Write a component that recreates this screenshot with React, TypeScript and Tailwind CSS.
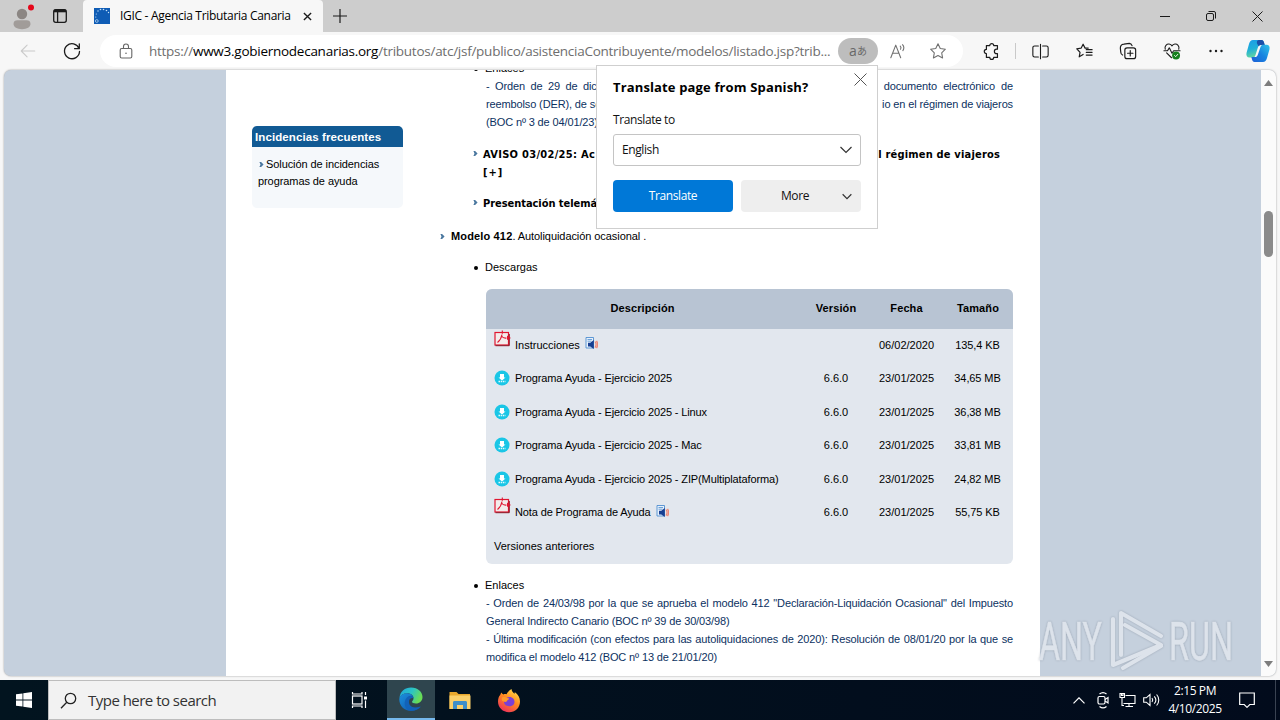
import type { ReactNode } from "react";
import clsx from "clsx";

type Row = {
  icon: "pdf" | "download";
  name: string;
  audio?: boolean;
  version?: string;
  date: string;
  size: string;
};

const ROWS: Row[] = [
  { icon: "pdf", name: "Instrucciones", audio: true, date: "06/02/2020", size: "135,4 KB" },
  { icon: "download", name: "Programa Ayuda - Ejercicio 2025", version: "6.6.0", date: "23/01/2025", size: "34,65 MB" },
  { icon: "download", name: "Programa Ayuda - Ejercicio 2025 - Linux", version: "6.6.0", date: "23/01/2025", size: "36,38 MB" },
  { icon: "download", name: "Programa Ayuda - Ejercicio 2025 - Mac", version: "6.6.0", date: "23/01/2025", size: "33,81 MB" },
  { icon: "download", name: "Programa Ayuda - Ejercicio 2025 - ZIP(Multiplataforma)", version: "6.6.0", date: "23/01/2025", size: "24,82 MB" },
  { icon: "pdf", name: "Nota de Programa de Ayuda", audio: true, version: "6.6.0", date: "23/01/2025", size: "55,75 KB" },
];

function Icon({ children, size = 20, className }: { children: ReactNode; size?: number; className?: string }) {
  return (
    <svg
      width={size}
      height={size}
      viewBox="0 0 20 20"
      fill="none"
      stroke="currentColor"
      strokeWidth="1.2"
      strokeLinecap="round"
      strokeLinejoin="round"
      className={clsx("block shrink-0", className)}
    >
      {children}
    </svg>
  );
}

function Slot({ children, className }: { children: ReactNode; className?: string }) {
  return <div className={clsx("flex h-full shrink-0 items-center justify-center", className)}>{children}</div>;
}

/* ---------- Browser chrome ---------- */

function TabBar() {
  return (
    <div className="flex h-8 items-stretch bg-[#cdcdcd] text-[#1b1b1b]">
      <div className="flex w-[83px] items-center">
        <svg width="26" height="26" viewBox="0 0 26 26" className="ml-[10px] mt-[2px] shrink-0">
          <circle cx="12" cy="10" r="5.2" fill="#8b8683" />
          <path d="M3.500 20c0-2.800 1.600-3.800 4-3.800h9c2.400 0 4 1 4 3.800 0 3-3.500 5.200-8.500 5.200S3.500 23 3.500 20z" fill="#a19c99" />
          <circle cx="21" cy="3.500" r="3" fill="#e5061a" />
        </svg>
        <svg width="16" height="16" viewBox="0 0 16 16" fill="none" stroke="currentColor" strokeWidth="1.300" className="ml-4 shrink-0">
          <rect x="1.700" y="1.700" width="12.600" height="12.600" rx="2" />
          <path d="M2 3h12" strokeWidth="2.600" />
          <path d="M5.600 4v10" />
        </svg>
      </div>
      <div className="flex w-60 items-center rounded-t-[4px] bg-[#f7f7f7]">
        <svg width="16" height="16" viewBox="0 0 16 16" className="ml-[11px] shrink-0">
          <rect width="16" height="16" fill="#0f5cb5" />
          <g fill="#c9e3f8">
            <circle cx="4" cy="3" r=".7" />
            <circle cx="6.500" cy="1.500" r=".8" />
            <circle cx="9.500" cy="1.500" r=".8" />
            <circle cx="12.500" cy="2.500" r=".8" />
            <circle cx="14.500" cy="4.500" r=".7" />
            <circle cx="2.300" cy="6" r=".6" />
            <circle cx="1.800" cy="9" r=".6" />
          </g>
          <circle cx="2.800" cy="13" r="1.400" fill="none" stroke="#c9e3f8" strokeWidth=".7" />
        </svg>
        <span className="ml-[10px] w-[183px] whitespace-nowrap text-[12px] tracking-[-0.3px] text-black">
          IGIC - Agencia Tributaria Canaria
        </span>
        <svg width="9" height="9" viewBox="0 0 10 10" stroke="currentColor" strokeWidth="1.500" className="shrink-0">
          <path d="M1 1l8 8M9 1l-8 8" />
        </svg>
      </div>
      <svg width="14" height="14" viewBox="0 0 14 14" stroke="currentColor" strokeWidth="1.200" className="ml-[10px] mt-[9px]">
        <path d="M7 0v14M0 7h14" />
      </svg>
      <div className="ml-auto flex">
        <Slot className="w-[46px]">
          <svg width="10" height="10" viewBox="0 0 10 10" stroke="currentColor"><path d="M0 5.500h10" /></svg>
        </Slot>
        <Slot className="w-[46px]">
          <svg width="10" height="10" viewBox="0 0 10 10" fill="none" stroke="currentColor">
            <rect x=".5" y="2.500" width="7" height="7" rx="1.500" />
            <path d="M2.500.5H8a1.500 1.500 0 0 1 1.500 1.500v5.500" />
          </svg>
        </Slot>
        <Slot className="w-[46px]">
          <svg width="11" height="11" viewBox="0 0 11 11" stroke="currentColor"><path d="M.5.5l10 10M10.500.5l-10 10" /></svg>
        </Slot>
      </div>
    </div>
  );
}

function Copilot() {
  return (
    <svg width="24" height="24" viewBox="0 0 24 24" className="shrink-0">
      <defs>
        <linearGradient id="cpA" x1="0" y1="0" x2="0.300" y2="1">
          <stop offset="0" stopColor="#1a9be8" />
          <stop offset=".55" stopColor="#20b0d8" />
          <stop offset="1" stopColor="#62d6a0" />
        </linearGradient>
        <linearGradient id="cpB" x1="1" y1="0" x2="0" y2="1">
          <stop offset="0" stopColor="#2ec4e8" />
          <stop offset=".5" stopColor="#1783e0" />
          <stop offset="1" stopColor="#1d5fd6" />
        </linearGradient>
      </defs>
      <path d="M7 1h8.500c1.500 0 2 1 2.500 2.500l.7 2.500h-3.500c-2 0-2.800.8-3.400 2.800L9.500 16c-.6 1.900-1.500 2.500-3 2.500H3.500C1 18.500 0 16.500.5 14L3 5C3.800 2.200 5 1 7 1z" fill="url(#cpA)" />
      <path d="M13 1h2.500c1.500 0 2 1 2.500 2.500l.7 2.500h-3.500c-1.300 0-2 .3-2.600 1.200L11 4.500C10.500 2.500 11.300 1 13 1z" fill="#1a4fa8" />
      <path d="M17 23H8.500c-1.500 0-2-1-2.500-2.500L5.400 18h3.200c2 0 2.800-.8 3.400-2.800L14.500 8c.6-1.600 1.500-2.200 3-2.200h3c2.500 0 3.500 2 3 4.500L21 19c-.8 2.800-2 4-4 4z" fill="url(#cpB)" />
    </svg>
  );
}

function Toolbar() {
  return (
    <div className="flex h-[38px] items-center bg-[#f7f7f7] pl-1.5 text-[#1b1b1b]">
      <Slot className="w-11 text-[#cacaca]">
        <Icon size={18}><path d="M17.500 10H2.500M9 3.500L2.500 10 9 16.500" /></Icon>
      </Slot>
      <Slot className="w-11">
        <Icon><path d="M17 7.500A7.500 7.500 0 1 0 17.500 10.500M17.300 3v4.700h-4.700" strokeWidth="1.300" /></Icon>
      </Slot>
      <div className="ml-1.5 flex h-8 w-[863px] items-center rounded-full bg-white">
        <svg width="14" height="17" viewBox="0 0 14 17" fill="none" stroke="#666" strokeWidth="1.100" className="ml-[19px] shrink-0">
          <rect x="1.200" y="5.500" width="11.600" height="9.500" rx="1.500" />
          <path d="M4.500 5.500V3.500a2.500 2.500 0 0 1 5 0v2" />
          <circle cx="7" cy="10.300" r=".8" fill="#666" stroke="none" />
        </svg>
        <span className="ml-4 w-[689px] shrink-0 whitespace-nowrap text-[13.5px] tracking-[-0.26px] text-[#6e6e6e]">
          https://<span className="text-black">www3.gobiernodecanarias.org</span>
          /tributos/atc/jsf/publico/asistenciaContribuyente/modelos/listado.jsp?trib...
        </span>
        <div className="flex h-[26px] w-10 shrink-0 items-center justify-center rounded-full bg-[#bdbdbd] text-[#686868]">
          <span className="text-[14px] leading-none">a</span>
          <span className="font-['Noto_Sans_CJK_JP',sans-serif] text-[10px] leading-none">あ</span>
        </div>
        <Slot className="w-10 text-[#707070]">
          <Icon size={18}>
            <path d="M2 17.500L7.500 3.500 13 17.500M4 12.500h7M12.500 4.500c1 1 1 2.500.3 3.600M15 3c1.600 1.800 1.700 4.700.4 6.600" />
          </Icon>
        </Slot>
        <Slot className="w-10 text-[#707070]">
          <Icon size={18}>
            <path d="M10 2l2.500 5.200 5.700.8-4.100 4 1 5.700L10 15l-5.100 2.700 1-5.700-4.100-4 5.700-.8z" />
          </Icon>
        </Slot>
      </div>
      <Slot className="w-[52px] pl-1">
        <Icon size={17}>
          <path d="M4 3h4a2.300 2.300 0 0 1 4.600 0H17v4.300h-1a2.600 2.600 0 0 0 0 5.200h1V17h-4.400a2.300 2.300 0 0 1-4.600 0H4v-4.500a2.500 2.500 0 0 1 0-5z" strokeWidth="1.400" />
        </Icon>
      </Slot>
      <div className="mr-0.5 h-4 w-px bg-[#c9c9c9]" />
      <Slot className="w-11">
        <Icon size={17}>
          <path d="M7.500 3.500H3a2 2 0 0 0-2 2v9a2 2 0 0 0 2 2h4.500M12.500 3.500H17a2 2 0 0 1 2 2v9a2 2 0 0 1-2 2h-4.500M10 1.500v17" strokeWidth="1.300" />
        </Icon>
      </Slot>
      <Slot className="w-11">
        <Icon size={18}>
          <path d="M9 13.800L4.700 16.500l.9-5L2 7.500l4.900-.7L9 2.400l2.200 4.400h3.500M12.500 8.500H19M12.500 11.500H19M12.500 14.500H19" strokeWidth="1.300" />
        </Icon>
      </Slot>
      <Slot className="w-11">
        <Icon size={18}>
          <rect x="6.500" y="6.500" width="12" height="12" rx="2.500" strokeWidth="1.300" />
          <path d="M4 14.500c-1.500-.5-2-1.500-2-3L1.500 7a4.500 4.500 0 0 1 4-4.700l6-.8c1.500 0 2.500 1 3 2.500M12.500 9.500v6M9.500 12.500h6" strokeWidth="1.300" />
        </Icon>
      </Slot>
      <Slot className="w-11">
        <Icon size={18}>
          <path d="M2.500 8C1.300 4.500 4.300 2 6.800 2.300 8.500 2.500 9.500 3.500 10 4.300c.5-.8 1.500-1.800 3.200-2 2.500-.3 5.500 2.200 4.300 5.700M4 12l5.500 5.500M1 9.800h4l2-3.300 3 6 1.800-2.700H19" />
          <circle cx="14.500" cy="15" r="4.400" fill="#15801c" stroke="none" />
          <path d="M12.800 15l1.300 1.300 2.300-2.600" stroke="#fff" strokeWidth="1" />
        </Icon>
      </Slot>
      <Slot className="w-11">
        <svg width="14" height="4" viewBox="0 0 14 4" fill="currentColor">
          <circle cx="1.500" cy="2" r="1.200" />
          <circle cx="7" cy="2" r="1.200" />
          <circle cx="12.500" cy="2" r="1.200" />
        </svg>
      </Slot>
      <Slot className="w-10"><Copilot /></Slot>
    </div>
  );
}

function TranslatePopup() {
  return (
    <div className="absolute left-[596px] top-[65px] h-[164px] w-[282px] border border-[#cfcfcf] bg-white px-4 text-[12px] tracking-[-0.4px] text-[#111]">
      <div className="flex h-[42px] items-center justify-between">
        <h2 className="mt-0.5 whitespace-nowrap text-[13px] font-bold tracking-[0.14px] text-black">Translate page from Spanish?</h2>
        <svg width="13" height="13" viewBox="0 0 13 13" stroke="#555" className="-mr-[6px] -mt-[16px]"><path d="M.5.5l12 12M12.500.5l-12 12" /></svg>
      </div>
      <p className="h-[26px] leading-6">Translate to</p>
      <div className="flex h-8 items-center justify-between rounded-[3px] border border-[#c4c4c4] px-2">
        <span>English</span>
        <svg width="12" height="8" viewBox="0 0 12 8" fill="none" stroke="#333" strokeWidth="1.200"><path d="M.5 1L6 6.500 11.500 1" /></svg>
      </div>
      <div className="mt-3.5 flex gap-2">
        <button className="h-8 w-[120px] rounded-[4px] bg-[#0078d7] text-white">Translate</button>
        <button className="flex h-8 w-[120px] items-center justify-end rounded-[4px] bg-[#eee] pr-[9px]">
          <span className="mr-[33px]">More</span>
          <svg width="10" height="7" viewBox="0 0 11 7" fill="none" stroke="#333" strokeWidth="1.300"><path d="M.7 1l4.800 4.800L10.300 1" /></svg>
        </button>
      </div>
    </div>
  );
}

/* ---------- Page ---------- */

function Arrow({ className }: { className?: string }) {
  return (
    <svg width="5" height="5" viewBox="0 0 5 6" className={clsx("shrink-0", className)}>
      <path d="M0 0h2l3 3-3 3H0l1.300-3z" fill="#4a779f" />
    </svg>
  );
}

function PdfIcon() {
  return (
    <svg width="17" height="17" viewBox="0 0 17 17" className="-mt-[13px] shrink-0">
      <rect x="1" y="2.500" width="13.500" height="12.500" fill="#f3eceb" stroke="#e01630" strokeWidth="1.200" />
      <path d="M1.500 15.700h13.800V4" fill="none" stroke="#8c1826" strokeWidth="1" />
      <path d="M3.500 12.500C6 10.500 7.500 7.500 8 4.500M8.300.5v3.300M7.500 6c1.500 2 3 2.300 5 2" fill="none" stroke="#e01630" strokeWidth="1.100" />
      <path d="M13 5.500l4 2.500-4 2z" fill="#e01630" />
    </svg>
  );
}

function DownloadIcon() {
  return (
    <svg width="16" height="16" viewBox="0 0 16 16" className="shrink-0">
      <circle cx="8" cy="8" r="7.500" fill="#1ac6e6" />
      <path d="M6 4h4v3.500h1.500L8 10.500 4.500 7.500H6z" fill="#fff" />
      <path d="M4.500 11.500h7" fill="none" stroke="#e4fafd" strokeWidth="1.400" strokeDasharray="1.500 .7" />
    </svg>
  );
}

function AudioIcon() {
  return (
    <svg width="13" height="13" viewBox="0 0 13 13" className="ml-[5px] -mt-0.5 shrink-0">
      <path d="M1 .5h7.500V11H1z" fill="#e8f1fb" stroke="#4f8fd0" strokeWidth=".9" />
      <path d="M2.500 2.500h4.500M2.500 4.200h4" stroke="#4f8fd0" strokeWidth=".8" />
      <path d="M3 5.700h2.300L8.800 3v9L5.300 9.500H3z" fill="#173f91" />
      <path d="M10 4.500c1.200 1.700 1.200 4.500 0 6.200M11.500 3.800c1.400 2.200 1.400 5.200 0 7.400" fill="none" stroke="#ee8a78" strokeWidth="1.300" />
    </svg>
  );
}

function Sidebar() {
  return (
    <aside className="ml-[26px] mt-14 w-[151px] shrink-0">
      <h3 className="h-[21px] rounded-t-[5px] bg-[#115a94] pl-[3px] text-[11.5px] font-bold leading-[22px] tracking-[0.1px] text-white">
        Incidencias frecuentes
      </h3>
      <div className="h-[61px] rounded-b-[5px] bg-[#f5f8fb] pl-1.5 pt-[9px] leading-[17px] tracking-[-0.08px] text-black">
        <div className="flex items-center">
          <Arrow className="ml-px mr-0.5" />
          <span>Solución de incidencias</span>
        </div>
        <div>programas de ayuda</div>
      </div>
    </aside>
  );
}

function Bullet({ children }: { children: ReactNode }) {
  return (
    <div className="-ml-3 flex items-center">
      <span className="mr-[7px] mt-0.5 size-1 rounded-full bg-black" />
      {children}
    </div>
  );
}

function Heading({ children }: { children: ReactNode }) {
  return (
    <div className="-ml-[13px] flex items-center font-['DejaVu_Sans_Condensed','DejaVu_Sans',sans-serif] font-bold tracking-[0.18px]">
      <Arrow className="mb-[3px] mr-[5px]" />
      {children}
    </div>
  );
}

function DownloadTable() {
  return (
    <div className="mt-[13px] h-[275px] overflow-hidden rounded-[6px] bg-[#e2e7ee] text-black">
      <div className="grid h-10 grid-cols-[313px_74px_67px_73px] items-center bg-[#b8c4d3] pb-0.5 text-center font-bold tracking-[0.1px]">
        <span>Descripción</span>
        <span>Versión</span>
        <span>Fecha</span>
        <span className="pl-[3px]">Tamaño</span>
      </div>
      {ROWS.map((row, i) => (
        <div key={i} className="grid h-[33.5px] grid-cols-[313px_74px_67px_73px] items-center pb-0.5 text-center">
          <div className="flex items-center pl-2">
            {row.icon === "pdf" ? <PdfIcon /> : <DownloadIcon />}
            <span
              className={clsx(
                "whitespace-nowrap",
                row.icon === "pdf" ? "ml-1" : "ml-[5px]",
                row.name.includes(" ") && "tracking-[-0.12px]"
              )}
            >
              {row.name}
            </span>
            {row.audio && <AudioIcon />}
          </div>
          <span>{row.version}</span>
          <span>{row.date}</span>
          <span className="pl-[2px] tracking-[-0.1px]">{row.size}</span>
        </div>
      ))}
      <div className="flex h-[33px] items-center pb-0.5 pl-2">Versiones anteriores</div>
    </div>
  );
}

function Article() {
  return (
    <main className="-mt-[11px] ml-[83px] w-[527px] whitespace-nowrap leading-[18px] text-black">
      <Bullet>Enlaces</Bullet>
      <div className="tracking-[-0.13px] text-[#0c3161]">
        <div className="flex justify-between">
          <span className="[word-spacing:2.600px]">- Orden de 29 de dic</span>
          <span className="[word-spacing:3.200px]">documento electrónico de</span>
        </div>
        <div className="flex justify-between">
          <span>reembolso (DER), de se</span>
          <span>io en el régimen de viajeros</span>
        </div>
        <div>(BOC nº 3 de 04/01/23)</div>
      </div>

      <div className="mt-[15px]">
        <Heading>
          <div className="flex w-[517px] justify-between">
            <span className="tracking-[0.3px]">AVISO 03/02/25: Ac</span>
            <span>l régimen de viajeros</span>
          </div>
        </Heading>
        <div className="-ml-[3px] font-['DejaVu_Sans_Condensed','DejaVu_Sans',sans-serif] font-bold tracking-[1px]">[+]</div>
      </div>
      <div className="mt-[13px]">
        <Heading><span className="tracking-[-0.05px]">Presentación telemá</span></Heading>
      </div>
      <div className="-ml-[46px] mt-3.5 flex items-center">
        <Arrow className="mr-1.5" />
        <b className="tracking-[0.15px]">Modelo 412</b>
        <span className="tracking-[-0.07px]">. Autoliquidación ocasional .</span>
      </div>
      <div className="mt-[13px]">
        <Bullet>Descargas</Bullet>
      </div>

      <DownloadTable />

      <div className="mt-3">
        <Bullet>Enlaces</Bullet>
      </div>
      <div className="tracking-[-0.13px] text-[#0c3161]">
        <p className="[text-align-last:justify]">
          - Orden de 24/03/98 por la que se aprueba el modelo 412 "Declaración-Liquidación Ocasional" del Impuesto
        </p>
        <p>General Indirecto Canario (BOC nº 39 de 30/03/98)</p>
        <p className="[text-align-last:justify]">
          - Última modificación (con efectos para las autoliquidaciones de 2020): Resolución de 08/01/20 por la que se
        </p>
        <p>modifica el modelo 412 (BOC nº 13 de 21/01/20)</p>
      </div>
    </main>
  );
}

function Scrollbar() {
  return (
    <div className="flex w-[15px] shrink-0 flex-col items-center bg-[#fbfbfb]">
      <svg width="9" height="6" viewBox="0 0 9 6" className="mt-2.5"><path d="M4.500 0L9 6H0z" fill="#7d7d7d" /></svg>
      <div className="mt-[125px] h-[46px] w-[9px] rounded-full bg-[#8b8b8b]" />
      <svg width="9" height="6" viewBox="0 0 9 6" className="mb-[9px] mt-auto"><path d="M4.500 6L9 0H0z" fill="#7d7d7d" /></svg>
    </div>
  );
}

function Watermark() {
  return (
    <svg width="200" height="66" viewBox="0 0 200 66" className="absolute left-[1036px] top-[607px] opacity-80 drop-shadow-[0_0_1px_rgba(90,100,115,0.5)]">
      <g fill="#e3e8ef" stroke="#e3e8ef" strokeWidth=".6" fontSize="53" className="font-['Roboto',sans-serif]">
        <text x="3" y="53" textLength="63" lengthAdjust="spacingAndGlyphs">ANY</text>
        <text x="133" y="53" textLength="64" lengthAdjust="spacingAndGlyphs">RUN</text>
      </g>
      <g fill="none" stroke="#e3e8ef" strokeWidth="4.200" strokeLinejoin="round" strokeLinecap="round">
        <path d="M77 12v46l48-20-36-20" />
        <path d="M85 48V6l40 23" />
        <path d="M87 61l38-22" />
      </g>
    </svg>
  );
}

/* ---------- Taskbar ---------- */

function EdgeLogo() {
  return (
    <svg width="26" height="26" viewBox="0 0 26 26">
      <defs>
        <linearGradient id="edA" x1="0" y1="0" x2="1" y2=".4">
          <stop offset="0" stopColor="#1fa5dc" />
          <stop offset=".55" stopColor="#2bc4c5" />
          <stop offset="1" stopColor="#69dd55" />
        </linearGradient>
        <linearGradient id="edB" x1="0" y1="0" x2="1" y2="1">
          <stop offset="0" stopColor="#1b91de" />
          <stop offset="1" stopColor="#0f4fa5" />
        </linearGradient>
      </defs>
      <path d="M1.500 12C2 5.500 7 1.500 13 1.500c7 0 11.500 4.500 11.500 9.500 0 4-3 6.500-6.500 6.500-2.500 0-4-.8-4-1.700 0-.8 1.500-1.300 1.500-3.600 0-2.700-2.500-5-6-5C5.500 7.200 2.500 9 1.500 12z" fill="url(#edA)" />
      <path d="M1.300 13.500C1.300 9.500 5 7.200 9.300 7.200c2.500 0 4.500 1.200 5.500 2.800-4.500-.5-6 2.500-6 5 0 4 3.500 6.500 8 6.500 2.500 0 4.500-.5 6-1.300C20.500 23 17 25 13 25 6.500 25 1.300 20 1.300 13.500z" fill="url(#edB)" />
      <path d="M9.500 23.500c-3-2.500-4-8-1-11.500 1.500-1.800 4-2.500 6.300-2 .5.800.7 1.500.7 2.200-3-.5-5 1.500-4.500 4.500.6 4 5 5.500 9 4.800 1-.2 2-.5 2.800-.8C20 24 14.500 25.500 9.500 23.500z" fill="#1262b8" />
    </svg>
  );
}

function FirefoxLogo() {
  return (
    <svg width="24" height="25" viewBox="0 0 24 25">
      <defs>
        <linearGradient id="ffA" x1=".8" y1="0" x2=".2" y2="1">
          <stop offset="0" stopColor="#ffe14a" />
          <stop offset=".45" stopColor="#ff8a1f" />
          <stop offset="1" stopColor="#ee2a5f" />
        </linearGradient>
      </defs>
      <path d="M4.500 4.500c.6 1 1 1.500 1.800 2 1.200-.5 2.300-.5 3.300-.2C10.500 4 12.500 2 14.500 1c.2 2.500 1.500 3.500 3 4.800.3-.7.3-1.200.2-1.800 3.500 2.500 5.300 5.500 5.300 9.500 0 6.300-4.700 10.700-11 10.700S1 19.500 1 13.500c0-3 1-5.300 2.200-6.500.2-1 .6-1.800 1.300-2.500z" fill="url(#ffA)" />
      <path d="M8.500 10c1.500 0 2-.7 3.500-1 3.500-.3 5.500 2.200 5.500 4.800 0 3-2.300 4.500-5.300 4.500-3.200 0-5.400-2-5.200-4.800l3.500-.5z" fill="#7a3fd6" />
      <path d="M5 9.500c2-.8 4-.3 5 .5l2.200.5c-.5 1.500-2.500 1.500-3 3.500l-2.500-.5C4.500 13 4.500 11 5 9.500z" fill="#ff9a2a" />
    </svg>
  );
}

function Taskbar() {
  return (
    <footer className="flex h-10 bg-gradient-to-r from-[#02141f] to-[#020b1c] text-white">
      <Slot className="w-12">
        <svg width="16" height="16" viewBox="0 0 16 16" fill="#fff">
          <path d="M0 2.300L6.500 1.400v6.200H0zM7.300 1.300L16 0v7.600H7.300zM0 8.400h6.500v6.200L0 13.700zM7.300 8.400H16V16l-8.700-1.300z" />
        </svg>
      </Slot>
      <div className="flex w-72 items-center border border-[#bdbdbd] bg-[#f2f2f2] text-[#333]">
        <svg width="17" height="17" viewBox="0 0 17 17" fill="none" stroke="#222" strokeWidth="1.300" className="ml-[11px]">
          <circle cx="10.500" cy="6.500" r="5.200" />
          <path d="M6.800 10.300L1 16.300" />
        </svg>
        <span className="ml-[11px] whitespace-nowrap text-[15px] tracking-[-0.52px]">Type here to search</span>
      </div>
      <Slot className="w-[51px] pr-1">
        <svg width="17" height="16" viewBox="0 0 17 16" fill="none" stroke="#fff" strokeWidth="1.200">
          <rect x="1.500" y="4" width="9.500" height="8" />
          <path d="M1.500 0v2h9.500V0M1.500 16v-2h9.500v2M14.500 0v3M14.500 8.500V16" />
          <path d="M13 4.500h3v3h-3z" fill="#fff" stroke="none" />
        </svg>
      </Slot>
      <Slot className="w-12 border-b-2 border-[#76b9ed] bg-[#2f454e]"><EdgeLogo /></Slot>
      <Slot className="w-[49px]">
        <svg width="22" height="19" viewBox="0 0 22 19">
          <path d="M.5 1h7l2 2H21v15H.5z" fill="#e9a82d" />
          <path d="M.5 4.500h21V18H.5z" fill="#fbd06a" />
          <path d="M4 18v-6.500C4 10.500 4.700 10 5.500 10h11c.8 0 1.500.5 1.500 1.500V18h-4v-4H8v4z" fill="#3f8fc9" />
        </svg>
      </Slot>
      <Slot className="w-[49px]"><FirefoxLogo /></Slot>

      <div className="ml-auto flex items-center">
        <Slot className="w-6">
          <svg width="12" height="7" viewBox="0 0 12 7" fill="none" stroke="#fff" strokeWidth="1.200"><path d="M.5 6.300L6 .8l5.500 5.500" /></svg>
        </Slot>
        <Slot className="w-6">
          <svg width="14" height="18" viewBox="0 0 14 18" fill="none" stroke="#fff" strokeWidth="1.200">
            <rect x="2" y="5.500" width="7" height="7.500" rx="1.500" />
            <path d="M9 8.500l3-2v5.500l-3-2M3.500 3c2-1.700 5-1.700 7 0M3.500 15.500c2 1.700 5 1.700 7 0" />
          </svg>
        </Slot>
        <Slot className="w-6">
          <svg width="17" height="16" viewBox="0 0 17 16" fill="none" stroke="#fff" strokeWidth="1.100">
            <path d="M6.500 3.500H16v8H4.500M10 11.500v3M6.500 14.500h7.500M3 6v7.500h2" />
            <path d="M1 1.500h4.500v4H1zM2.500 1.500v2h1.500v-2" />
          </svg>
        </Slot>
        <Slot className="w-6">
          <svg width="17" height="14" viewBox="0 0 17 14" fill="none" stroke="#fff" strokeWidth="1.100">
            <path d="M.7 4.800h2.600L7 1.500v11L3.300 9.200H.7zM9 5c.9 1.200.9 2.800 0 4M11.300 3.300c1.900 2.200 1.900 5.200 0 7.400M13.600 1.500c2.900 3.200 2.900 7.800 0 11" />
          </svg>
        </Slot>
        <div className="w-16 whitespace-nowrap text-center text-[12px] leading-[18px] tracking-[-0.4px]">
          <div>2:15 PM</div>
          <div>4/10/2025</div>
        </div>
        <Slot className="w-10">
          <svg width="16" height="16" viewBox="0 0 16 16" fill="none" stroke="#fff" strokeWidth="1.200">
            <path d="M.7 1h14.600v11.500h-4.500L8 15.300l-2.800-2.800H.7z" />
          </svg>
        </Slot>
        <div className="ml-2 mr-1 h-10 w-px bg-[#3a4352]" />
      </div>
    </footer>
  );
}

export default function App() {
  return (
    <div className="relative flex h-[720px] w-[1280px] flex-col overflow-hidden bg-[#f7f7f7] font-['Open_Sans','Noto_Sans',sans-serif]">
      <TabBar />
      <Toolbar />
      <div className="mx-1 mb-1 flex min-h-0 flex-1 overflow-hidden rounded-[7px] bg-[#c5d0dd] font-['Liberation_Sans',Arial,sans-serif] text-[11px] shadow-[0_0_2px_rgba(0,0,0,0.4)]">
        <div className="ml-[222px] flex w-[814px] bg-white">
          <Sidebar />
          <Article />
        </div>
        <div className="flex-1" />
        <Scrollbar />
      </div>
      <Taskbar />
      <TranslatePopup />
      <Watermark />
    </div>
  );
}
